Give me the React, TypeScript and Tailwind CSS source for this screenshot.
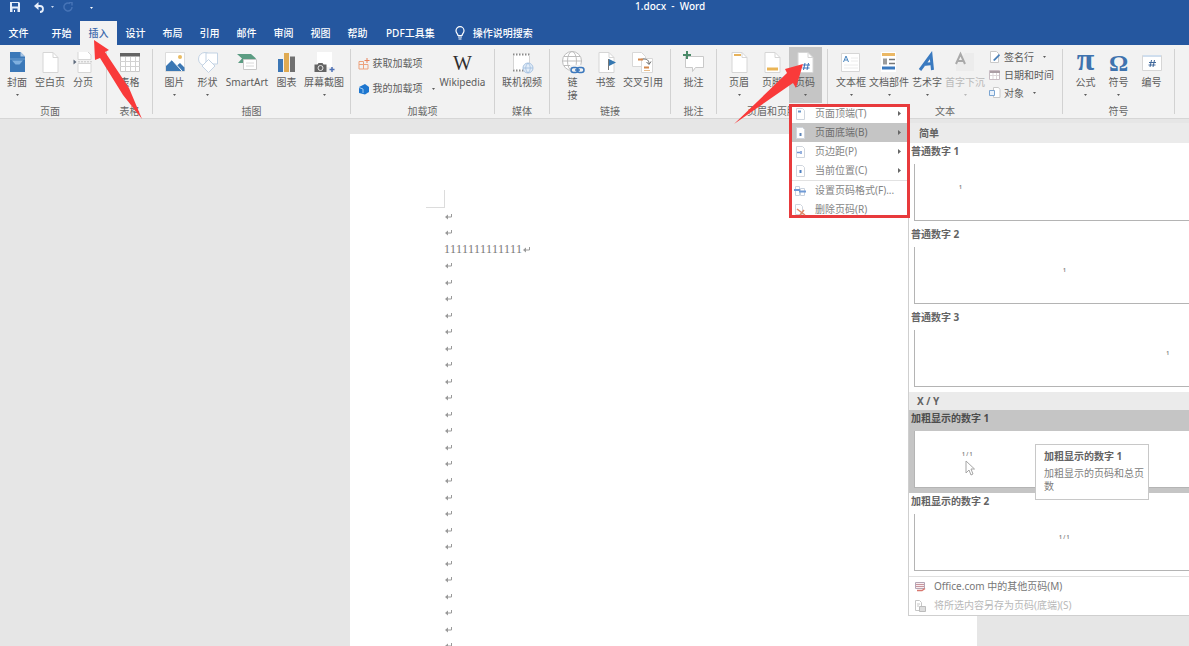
import type { ReactNode } from 'react';
import clsx from 'clsx';

const TABS = ['文件', '开始', '插入', '设计', '布局', '引用', '邮件', '审阅', '视图', '帮助'];

const FONT = "font-['Noto_Sans','Noto_Sans_CJK_SC',sans-serif]";

/* ---------- icons ---------- */

function Icon({ children }: { children: ReactNode }) {
  return (
    <svg className="h-6 w-6 shrink-0" viewBox="0 0 24 24" fill="none" aria-hidden="true">
      {children}
    </svg>
  );
}

function Sheet() {
  return (
    <>
      <path d="M5 1.5h10l5 5v15H5z" fill="#fff" stroke="#d6d6d6" />
      <path d="M15 1.5v5h5" stroke="#d6d6d6" />
    </>
  );
}

const icons = {
  cover: (
    <Icon>
      <path d="M5 1h10.500l4.500 4.500V21H5z" fill="#3b78b8" />
      <path d="M15.500 1v4.500H20z" fill="#a9c6e4" />
      <path d="M5 8h15" stroke="#6e9fd0" />
      <path d="M7 9.500h11l-3.500 4h-4z" fill="#7fb0df" />
    </Icon>
  ),
  blank: (
    <Icon>
      <Sheet />
    </Icon>
  ),
  pageBreak: (
    <Icon>
      <path d="M7 1v7.500h13V4l-3-3M7 21.500v-9h13v9z" fill="#fff" stroke="#d6d6d6" />
      <path d="M2.500 8.500v5l3-2.500z" fill="#5e6b7c" />
      <path d="M7 10.800h14" stroke="#c6c6c6" strokeDasharray="2 1" />
    </Icon>
  ),
  table: (
    <Icon>
      <path d="M2.500 2.500h19v18h-19z" fill="#fff" stroke="#c9c9c9" />
      <path d="M2 2h20v3.500H2z" fill="#636363" />
      <path d="M2 10.500h20M2 15.500h20M7.500 6v14.500M12.500 6v14.500M17.500 6v14.500" stroke="#d2d2d2" />
    </Icon>
  ),
  picture: (
    <Icon>
      <path d="M2.500 1.500h19v19h-19z" fill="#fff" stroke="#dcdcdc" />
      <path d="M3 20v-5l6-6 5 5.500 3-2.500 4.500 4.500V20z" fill="#3c78b4" />
      <path d="M9 9l10 11" stroke="#fff" />
      <circle cx="17" cy="6" r="2" fill="#e9bb62" />
    </Icon>
  ),
  shapes: (
    <Icon>
      <circle cx="9" cy="8" r="6.500" fill="#fff" stroke="#c3d3e4" />
      <path d="M10 2h11.500v11H10z" fill="#fff" stroke="#c3d3e4" />
      <path d="M12.500 8.500l6.500 6.500-6.500 6.500L6 15z" fill="#fff" stroke="#c3d3e4" />
    </Icon>
  ),
  smartArt: (
    <Icon>
      <path d="M2 3h14l5 4.500-5 4.500H3l4-4.500z" fill="#5b9c82" />
      <path d="M8.500 8.500h13v10h-13z" fill="#fff" stroke="#c8c8c8" />
      <path d="M11 12h8M11 15h8" stroke="#dadada" />
    </Icon>
  ),
  chart: (
    <Icon>
      <path d="M3 8h5v13H3z" fill="#3c76b5" />
      <path d="M9 2h5v19H9z" fill="#dfaa52" />
      <path d="M15 5.500h5V21h-5z" fill="#707070" />
    </Icon>
  ),
  screenshot: (
    <Icon>
      <path d="M5 1h15v15H5z" fill="#fff" />
      <path d="M2.500 13.500h3l1-1.500h4l1 1.500h3V21h-12z" fill="#646464" />
      <circle cx="8.500" cy="17" r="2.500" fill="#646464" stroke="#e8e8e8" />
      <path d="M20 16v5M17.500 18.500h5" stroke="#4d70b5" strokeWidth="1.500" />
    </Icon>
  ),
  wikipedia: (
    <span className="flex h-6 items-center font-['Liberation_Serif',serif] text-[20px] text-[#2f2f2f]">W</span>
  ),
  video: (
    <Icon>
      <path d="M3 3h17v17H3z" fill="#fff" />
      <path d="M3 3.500h17M3 19.500h17" stroke="#8a8a8a" strokeWidth="2" strokeDasharray="1.500 1.500" />
      <path d="M3.500 5v13M19.500 5v13" stroke="#d4d4d4" />
      <circle cx="18" cy="17" r="5" fill="#e3edf8" stroke="#a9c4e2" />
      <path d="M13 17h10M18 12c-3 3-3 7 0 10M18 12c3 3 3 7 0 10" stroke="#a9c4e2" />
    </Icon>
  ),
  link: (
    <Icon>
      <circle cx="11" cy="10" r="9.500" fill="#fff" stroke="#bdbdbd" />
      <ellipse cx="11" cy="10" rx="4.500" ry="9.500" stroke="#bdbdbd" />
      <path d="M1.500 10h19M3 5.500h16M3 14.500h16" stroke="#bdbdbd" />
      <path d="M9 14h15v10H9z" fill="#f2f2f2" />
      <rect x="10" y="16.500" width="7" height="5" rx="2.500" stroke="#3d79bd" strokeWidth="1.500" />
      <rect x="16" y="16.500" width="7" height="5" rx="2.500" stroke="#3d79bd" strokeWidth="1.500" />
      <path d="M14 19h5" stroke="#3d79bd" strokeWidth="1.500" />
    </Icon>
  ),
  bookmark: (
    <Icon>
      <Sheet />
      <path d="M14.500 8v11" stroke="#777" />
      <path d="M15 8l7 3.500-7 3.500z" fill="#3577b0" />
    </Icon>
  ),
  crossRef: (
    <Icon>
      <path d="M1.500 1.500h9l4 4v10h-13z" fill="#fff" stroke="#d8d8d8" />
      <path d="M10.500 7.500h11v14h-11z" fill="#fff" stroke="#d8d8d8" />
      <path d="M7 8.500h5M13 16.500h5" stroke="#d4884c" strokeWidth="2" />
      <path d="M12 8c4 0 6 1 6 5M15.500 11l2.500 2.500 2-3" stroke="#666" />
      <path d="M13 19.500h6" stroke="#e9be8d" />
    </Icon>
  ),
  comment: (
    <Icon>
      <path d="M3.500 5.500h18v11h-8l-3 4v-4h-7z" fill="#fff" stroke="#c9c9c9" />
      <path d="M5 0v8M1 4h8" stroke="#4a8a68" strokeWidth="2" />
    </Icon>
  ),
  header: (
    <Icon>
      <Sheet />
      <path d="M7 4h7" stroke="#e7b25a" strokeWidth="2" />
    </Icon>
  ),
  footer: (
    <Icon>
      <Sheet />
      <path d="M7 18h11" stroke="#eab556" strokeWidth="3" />
    </Icon>
  ),
  pageNumber: (
    <Icon>
      <Sheet />
      <path d="M12 12l-1.500 7M15.500 12L14 19M10 14h7M9.500 17h7" stroke="#3c70b8" />
    </Icon>
  ),
  textBox: (
    <Icon>
      <path d="M2.500 2.500h18v18h-18z" fill="#fff" stroke="#d6d6d6" />
      <path d="M4.500 11L7 5l2.500 6M5.500 9h3" stroke="#4b86bf" />
      <path d="M12 7h7M12 10h7M5 14h14M5 17h14" stroke="#ececec" />
    </Icon>
  ),
  quickParts: (
    <Icon>
      <path d="M4 1h15v20H4z" fill="#fff" />
      <path d="M5 3.500h13" stroke="#ebb865" strokeWidth="3" />
      <path d="M6 7.500h4v6H6z" fill="#9c9c9c" />
      <path d="M12 8.500h6M12 12.500h6" stroke="#777" strokeWidth="1.500" />
      <path d="M5 17h13" stroke="#3b79be" strokeWidth="3" />
    </Icon>
  ),
  wordArt: (
    <Icon>
      <path d="M5 19L16 4l1.500 15M8.500 13.500l9-1" stroke="#3a7ac0" strokeWidth="3" />
    </Icon>
  ),
  dropCap: (
    <Icon>
      <path d="M12 2h9v18H3v-5" fill="#ececec" />
      <path d="M3 13L7.500 3 12 13M4.500 10h6" stroke="#a9a9a9" strokeWidth="2" />
    </Icon>
  ),
  equation: (
    <span className="h-6 font-['Liberation_Serif',serif] text-[32px] leading-4 font-bold text-[#3f73ae]">π</span>
  ),
  symbol: (
    <span className="h-6 font-['Liberation_Serif',serif] text-[24px] leading-6 font-bold text-[#3f73ae]">Ω</span>
  ),
  number: (
    <Icon>
      <path d="M2.500 4.500h19v15h-19z" fill="#fff" stroke="#d6d6d6" />
      <path d="M3 5h18" stroke="#cfdeee" strokeWidth="2" />
      <path d="M11.500 9L10 16M14.500 9L13 16M9 11.500h7M8.500 14h7" stroke="#41699c" />
    </Icon>
  ),
};

function SmallIcon({ children }: { children: ReactNode }) {
  return (
    <svg className="h-3 w-3 shrink-0" viewBox="0 0 12 12" fill="none" aria-hidden="true">
      {children}
    </svg>
  );
}

const smallIcons = {
  store: (
    <SmallIcon>
      <path d="M1 3.500h4.500V11H1zM5.500 6.500H10V11H5.500M1 6.500h4.500" stroke="#eda27c" />
      <path d="M9 0v5M6.500 2.500h5" stroke="#e8825a" />
    </SmallIcon>
  ),
  addins: (
    <SmallIcon>
      <path d="M1 4l6-3 4 3v5l-4 2.500L1 10z" fill="#1d76cf" />
      <path d="M1 4.500l4 1.500v4" stroke="#9dcaf5" />
    </SmallIcon>
  ),
  signature: (
    <SmallIcon>
      <path d="M1.500 0.500h6l2 2v9h-8z" fill="#fff" stroke="#c9c9c9" />
      <path d="M4 9l6-6 1 1.500L5.500 10z" fill="#4a80b8" />
    </SmallIcon>
  ),
  date: (
    <SmallIcon>
      <path d="M0.500 1.500h10v9h-10z" fill="#fff" stroke="#c9bdc4" />
      <path d="M1 3h10" stroke="#ab9ea5" strokeWidth="2" />
      <path d="M1 6.500h9M4 4v6M7.500 4v6" stroke="#ddd7da" />
    </SmallIcon>
  ),
  object: (
    <SmallIcon>
      <path d="M4.500 0.500h5l1.500 2v8H4.500z" fill="#fff" stroke="#c9c9c9" />
      <path d="M0.500 3.500h5v5h-5z" fill="#eaf2fb" stroke="#7ba5d2" />
    </SmallIcon>
  ),
  top: (
    <SmallIcon>
      <path d="M2.500 0.500h6l2 2v9h-8z" fill="#fff" stroke="#d0d6de" />
      <path d="M4 3.500h3" stroke="#6695c9" strokeWidth="2" />
    </SmallIcon>
  ),
  bottom: (
    <SmallIcon>
      <path d="M2.500 0.500h6l2 2v9h-8z" fill="#fff" stroke="#d0d6de" />
      <path d="M6.500 6v3" stroke="#5c84b8" strokeWidth="2" />
    </SmallIcon>
  ),
  margin: (
    <SmallIcon>
      <path d="M2.500 0.500h6l2 2v9h-8z" fill="#fff" stroke="#d0d6de" />
      <path d="M3 6.500h3M7 5v3" stroke="#7396d4" strokeWidth="1.500" />
    </SmallIcon>
  ),
  current: (
    <SmallIcon>
      <path d="M2.500 0.500h6l2 2v9h-8z" fill="#fff" stroke="#d0d6de" />
      <path d="M6.500 5v3" stroke="#4c7fc0" strokeWidth="2" />
    </SmallIcon>
  ),
  format: (
    <SmallIcon>
      <path d="M1.500 1.500h4v9h-4zM6.500 3.500h4v7h-4z" fill="#fff" stroke="#c9d2de" />
      <path d="M0 5h6M5 6.500h7" stroke="#6f9ad6" strokeWidth="2" />
    </SmallIcon>
  ),
  remove: (
    <SmallIcon>
      <path d="M1.500 0.500h5l2 2v8h-7z" fill="#fff" stroke="#d0d6de" />
      <path d="M3 5l8 6M10 6l-4 5" stroke="#df8a68" strokeWidth="1.500" />
    </SmallIcon>
  ),
  office: (
    <SmallIcon>
      <path d="M1.500 1.500h9v6h-9z" fill="#f7eef0" stroke="#b5a5b5" />
      <path d="M2 3.500h8M2 5.500h8" stroke="#c9959d" />
      <path d="M3 9.500h5l3-2" stroke="#d8786f" strokeWidth="1.500" />
    </SmallIcon>
  ),
  save: (
    <SmallIcon>
      <path d="M1.500 0.500h4l2 2v8h-6z" fill="#fff" stroke="#c6c6c6" />
      <path d="M5.500 6.500h6v5h-6z" fill="#ddd" stroke="#bcbcbc" />
      <path d="M3 4h3M3 6h2" stroke="#c6c6c6" />
    </SmallIcon>
  ),
};

function Caret({ className }: { className?: string }) {
  return (
    <svg className={clsx('h-[2px] w-[3px] shrink-0', className)} viewBox="0 0 3 2" aria-hidden="true">
      <path d="M0 0h3L1.500 2z" fill="currentColor" />
    </svg>
  );
}

/* ---------- ribbon ---------- */

interface RibbonButtonProps {
  icon: ReactNode;
  label: string;
  width?: string;
  caret?: boolean;
  active?: boolean;
  disabled?: boolean;
}

function RibbonButton({ icon, label, width = 'w-[33px]', caret, active, disabled }: RibbonButtonProps) {
  return (
    <button
      disabled={disabled}
      className={clsx(
        'flex h-14 shrink-0 flex-col items-center pt-1',
        width,
        active && 'bg-[#c5c5c5]',
        disabled ? 'text-[#b8b8b8]' : 'text-[#5c5c5c]'
      )}
    >
      {icon}
      <span className="mt-px whitespace-pre text-center leading-[13px]">{label}</span>
      {caret && <Caret className="mt-[5px]" />}
    </button>
  );
}

function SmallButton({ icon, label, caret }: { icon: ReactNode; label: string; caret?: boolean }) {
  return (
    <button className="flex items-center gap-[3px] whitespace-nowrap">
      {icon}
      <span>{label}</span>
      {caret && <Caret className="ml-[6px]" />}
    </button>
  );
}

interface RibbonGroupProps {
  title: string;
  width: string;
  align?: string;
  children: ReactNode;
}

function RibbonGroup({ title, width, align, children }: RibbonGroupProps) {
  return (
    <section aria-label={title} className={clsx('flex shrink-0 flex-col pt-[2px]', width, align)}>
      <div className="flex h-14 justify-center">{children}</div>
      <h2 className="pt-px text-center leading-[14px] text-[#666]">{title}</h2>
    </section>
  );
}

function Divider() {
  return <div className="my-1 w-px shrink-0 bg-[#d2d2d2]" />;
}

function Ribbon() {
  return (
    <div className="flex h-[74px] shrink-0 overflow-hidden border-b border-[#d6d6d6] bg-[#f2f2f2] text-[10px] text-[#5c5c5c]">
      <RibbonGroup title="页面" width="w-[106px]" align="pr-[6px]">
        <RibbonButton icon={icons.cover} label="封面" caret />
        <RibbonButton icon={icons.blank} label="空白页" />
        <RibbonButton icon={icons.pageBreak} label="分页" />
      </RibbonGroup>
      <Divider />
      <RibbonGroup title="表格" width="w-[45px]">
        <RibbonButton icon={icons.table} label="表格" caret />
      </RibbonGroup>
      <Divider />
      <RibbonGroup title="插图" width="w-[197px]">
        <RibbonButton icon={icons.picture} label="图片" caret />
        <RibbonButton icon={icons.shapes} label="形状" caret />
        <RibbonButton icon={icons.smartArt} label="SmartArt" width="w-[46px]" />
        <RibbonButton icon={icons.chart} label="图表" />
        <RibbonButton icon={icons.screenshot} label="屏幕截图" width="w-[42px]" caret />
      </RibbonGroup>
      <Divider />
      <RibbonGroup title="加载项" width="w-[143px]">
        <div className="flex w-20 flex-col gap-[10px] pt-[9px]">
          <SmallButton icon={smallIcons.store} label="获取加载项" />
          <SmallButton icon={smallIcons.addins} label="我的加载项" caret />
        </div>
        <RibbonButton icon={icons.wikipedia} label="Wikipedia" width="w-[50px]" />
      </RibbonGroup>
      <Divider />
      <RibbonGroup title="媒体" width="w-[54px]">
        <RibbonButton icon={icons.video} label="联机视频" width="w-[42px]" />
      </RibbonGroup>
      <Divider />
      <RibbonGroup title="链接" width="w-[120px]">
        <RibbonButton icon={icons.link} label={'链\n接'} />
        <RibbonButton icon={icons.bookmark} label="书签" />
        <RibbonButton icon={icons.crossRef} label="交叉引用" width="w-[42px]" />
      </RibbonGroup>
      <Divider />
      <RibbonGroup title="批注" width="w-[45px]">
        <RibbonButton icon={icons.comment} label="批注" />
      </RibbonGroup>
      <Divider />
      <RibbonGroup title="页眉和页脚" width="w-[110px]">
        <RibbonButton icon={icons.header} label="页眉" caret />
        <RibbonButton icon={icons.footer} label="页脚" caret />
        <RibbonButton icon={icons.pageNumber} label="页码" caret active />
      </RibbonGroup>
      <Divider />
      <RibbonGroup title="文本" width="w-[234px]">
        <RibbonButton icon={icons.textBox} label="文本框" width="w-9" caret />
        <RibbonButton icon={icons.quickParts} label="文档部件" width="w-10" caret />
        <RibbonButton icon={icons.wordArt} label="艺术字" width="w-9" caret />
        <RibbonButton icon={icons.dropCap} label="首字下沉" width="w-10" caret disabled />
        <div className="flex w-[72px] flex-col gap-1 pt-[3px] pl-1 leading-[14px]">
          <SmallButton icon={smallIcons.signature} label="签名行" caret />
          <SmallButton icon={smallIcons.date} label="日期和时间" />
          <SmallButton icon={smallIcons.object} label="对象" caret />
        </div>
      </RibbonGroup>
      <Divider />
      <RibbonGroup title="符号" width="w-[111px]">
        <RibbonButton icon={icons.equation} label="公式" caret />
        <RibbonButton icon={icons.symbol} label="符号" caret />
        <RibbonButton icon={icons.number} label="编号" />
      </RibbonGroup>
      <Divider />
    </div>
  );
}

/* ---------- title bar and tabs ---------- */

function TitleBar() {
  return (
    <header className="flex h-[21px] shrink-0 items-start text-[10px] font-medium text-white">
      <div className="flex h-[14px] w-[635px] items-center pl-[10px]">
        <button aria-label="保存">
          <svg className="h-[10px] w-[10px]" viewBox="0 0 10 10" aria-hidden="true">
            <path d="M0 0h9l1 1v9H0z" fill="#e6eefa" />
            <path d="M2 1h6v3.500H2zM2.500 6.500h5V10h-5z" fill="#25579f" />
            <path d="M4 8h1v2H4z" fill="#fff" />
          </svg>
        </button>
        <button aria-label="撤消" className="ml-[14px]">
          <svg className="h-[11px] w-[10px]" viewBox="0 0 10 11" fill="none" aria-hidden="true">
            <path d="M1 4h5c4 0 4 6 0 6" stroke="#e6eefa" strokeWidth="1.800" />
            <path d="M4.500 0v8L0 4z" fill="#e6eefa" />
          </svg>
        </button>
        <Caret className="ml-[7px] text-[#c6d6ee]" />
        <button aria-label="重复" className="ml-[9px]">
          <svg className="h-[10px] w-[10px]" viewBox="0 0 10 10" fill="none" aria-hidden="true">
            <path d="M7 1.500A4 4 0 1 0 9 5M6 0.500h3v3" stroke="#4673b6" strokeWidth="1.500" />
          </svg>
        </button>
        <Caret className="mt-[2px] ml-[17px] text-white" />
      </div>
      <h1 className="whitespace-pre leading-[13px]">1.docx  -  Word</h1>
    </header>
  );
}

function TabBar() {
  return (
    <nav className="flex h-6 shrink-0 text-[10px] font-medium text-white">
      {TABS.map((tab, i) => (
        <button
          key={tab}
          className={clsx(
            'w-[37px] leading-6',
            i === 0 && 'mr-[6px]',
            tab === '插入' && 'bg-[#f2f2f2] text-[#3c67ab]'
          )}
        >
          {tab}
        </button>
      ))}
      <button className="ml-[6px] px-1 leading-6">PDF工具集</button>
      <button className="ml-4 flex items-center gap-2">
        <svg className="h-[14px] w-[10px]" viewBox="0 0 10 14" fill="none" aria-hidden="true">
          <path d="M3 9.500C3 8 1 7 1 4.700a4 4 0 0 1 8 0C9 7 7 8 7 9.500z" stroke="#fff" strokeWidth="1.200" />
          <path d="M3 11h4M3.500 13h3" stroke="#fff" strokeWidth="1.200" />
        </svg>
        操作说明搜索
      </button>
    </nav>
  );
}

/* ---------- document ---------- */

function ParagraphMark() {
  return (
    <svg className="mx-px h-[7px] w-[7px] shrink-0" viewBox="0 0 7 7" fill="none" aria-hidden="true">
      <path d="M6.500 1v3H1" stroke="#9a9a9a" />
      <path d="M3 1.500v5L0 4z" fill="#9a9a9a" />
    </svg>
  );
}

function DocumentPage() {
  return (
    <main className="flex-1 overflow-hidden bg-[#e6e6e6] pt-[15px] pr-[212px] pl-[350px]">
      <article className="h-full bg-white pt-[56px] pl-[76px] font-['Liberation_Serif',serif]">
        <div className="h-[18px] w-[19px] border-r border-b border-[#dcdcdc]" />
        <div className="flex h-[446px] flex-col pl-[18px] text-xs text-[#777] [font-kerning:none]">
          {Array.from({ length: 27 }, (_, i) => (
            <p key={i} className="flex flex-1 items-center leading-none">
              {i === 2 && '1111111111111'}
              <ParagraphMark />
            </p>
          ))}
        </div>
      </article>
    </main>
  );
}

/* ---------- page number menu ---------- */

const MENU = [
  { icon: smallIcons.top, label: '页面顶端(T)', sub: true },
  { icon: smallIcons.bottom, label: '页面底端(B)', sub: true, active: true },
  { icon: smallIcons.margin, label: '页边距(P)', sub: true },
  { icon: smallIcons.current, label: '当前位置(C)', sub: true },
  { icon: smallIcons.format, label: '设置页码格式(F)...', separated: true },
  { icon: smallIcons.remove, label: '删除页码(R)' },
];

function PageNumberMenu() {
  return (
    <div role="menu" className="absolute top-[104px] left-[789px] w-[121px] border-[3px] border-[#e83a3c] bg-white text-[10px] text-[#858585]">
      <div className="-mt-[3px] -mb-1 flex flex-col">
        {MENU.map((item) => (
          <button
            key={item.label}
            role="menuitem"
            className={clsx(
              'flex items-center gap-[9px] pl-[2px] leading-[19px] whitespace-nowrap',
              item.active && 'bg-[#c5c5c5] text-[#6e6e6e]',
              item.separated && 'border-t border-[#e2e2e2]'
            )}
          >
            {item.icon}
            {item.label}
            {item.sub && (
              <svg className="mr-[6px] ml-auto h-[5px] w-[3px]" viewBox="0 0 3 5" aria-hidden="true">
                <path d="M0 0l3 2.500L0 5z" fill="#666" />
              </svg>
            )}
          </button>
        ))}
      </div>
    </div>
  );
}

interface GalleryItemProps {
  title: string;
  mark: string;
  align: string;
  active?: boolean;
}

function GalleryItem({ title, mark, align, active }: GalleryItemProps) {
  return (
    <button className={clsx('flex h-[83px] flex-col pl-[2px] text-left', active && 'bg-[#c5c5c5] text-[#4c4c4c]')}>
      <span className="leading-[17px] font-bold">{title}</span>
      <span
        className={clsx(
          'mt-1 ml-[3px] flex h-[57px] items-center self-stretch border-b border-l border-[#b4b4b4] bg-white pb-[9px] text-[5px] font-bold whitespace-pre text-[#888]',
          align
        )}
      >
        {mark}
      </span>
    </button>
  );
}

function Gallery() {
  return (
    <div className="absolute top-[123px] right-0 left-[908px] flex flex-col border-b border-l border-[#cfcfcf] bg-white text-[10px] text-[#636363]">
      <h3 className="bg-[#ebebeb] pl-[10px] leading-5 font-bold">简单</h3>
      <GalleryItem title="普通数字 1" mark="1" align="pl-11" />
      <GalleryItem title="普通数字 2" mark="1" align="pl-[148px]" />
      <GalleryItem title="普通数字 3" mark="1" align="justify-end pr-5" />
      <h3 className="bg-[#ebebeb] pl-2 leading-[18px] font-bold">X / Y</h3>
      <GalleryItem title="加粗显示的数字 1" mark="1 / 1" align="pl-[47px]" active />
      <GalleryItem title="加粗显示的数字 2" mark="1 / 1" align="pl-[144px]" />
      <div className="flex flex-col border-t border-[#e0e0e0] text-[#777]">
        <button className="flex items-center gap-2 pl-[5px] leading-[19px]">
          {smallIcons.office}
          Office.com 中的其他页码(M)
        </button>
        <button disabled className="flex items-center gap-2 pl-[5px] leading-[19px] text-[#b8b8b8]">
          {smallIcons.save}
          将所选内容另存为页码(底端)(S)
        </button>
      </div>
    </div>
  );
}

function Tooltip() {
  return (
    <div role="tooltip" className="absolute top-[444px] left-[1035px] w-[114px] border border-[#c8c8c8] bg-white pt-[3px] pb-[6px] pl-2 text-[10px] text-[#808080]">
      <p className="leading-4 font-bold text-[#636363]">加粗显示的数字 1</p>
      <p className="pt-[3px] leading-[13px]">加粗显示的页码和总页数</p>
    </div>
  );
}

function Pointer() {
  return (
    <svg className="absolute top-[460px] left-[965px] h-4 w-[10px]" viewBox="0 0 10 16" aria-hidden="true">
      <path d="M1 1v12l3-3 2 5 2-1-2-5h3.500z" fill="#fff" stroke="#a5a5a5" />
    </svg>
  );
}

function Arrows() {
  return (
    <>
      <svg className="pointer-events-none absolute top-[40px] left-[94px] h-20 w-12" viewBox="0 0 48 80" aria-hidden="true">
        <path d="M0 0L15 10l-4 2 24 36 13 31L29 55 6 18l-5 2z" fill="#f93a3a" />
      </svg>
      <svg className="pointer-events-none absolute top-[64px] left-[734px] h-[61px] w-[70px]" viewBox="0 0 70 61" aria-hidden="true">
        <path d="M69 0L51 5l2 4L0 60l59-41 3 5z" fill="#f93a3a" />
      </svg>
    </>
  );
}

export default function App() {
  return (
    <div className={clsx('relative flex h-screen flex-col overflow-hidden bg-[#25579f]', FONT)}>
      <TitleBar />
      <TabBar />
      <Ribbon />
      <DocumentPage />
      <Gallery />
      <PageNumberMenu />
      <Tooltip />
      <Pointer />
      <Arrows />
    </div>
  );
}
